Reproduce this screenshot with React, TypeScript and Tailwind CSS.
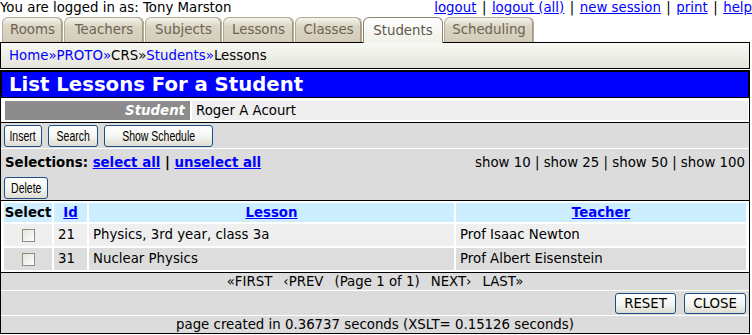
import type { ReactNode } from "react";

const tabs = [
    { label: "Rooms", w: "w-[61px]" },
    { label: "Teachers", w: "w-[80px]" },
    { label: "Subjects", w: "w-[77px]" },
    { label: "Lessons", w: "w-[71px]" },
    { label: "Classes", w: "w-[67px]" },
    { label: "Students", w: "w-[80px]", active: true },
    { label: "Scheduling", w: "w-[90px]" },
];

const rows = [
    { id: "21", lesson: "Physics, 3rd year, class 3a", teacher: "Prof Isaac Newton", bg: "bg-[#efefef]" },
    { id: "31", lesson: "Nuclear Physics", teacher: "Prof Albert Eisenstein", bg: "bg-[#dddddd]" },
];

function Btn({ children, className }: { children: ReactNode; className: string }) {
    return (
        <button className={`rounded-[3px] border border-[#1c4f83] bg-[linear-gradient(to_bottom,#ffffff,#f4f4f0_55%,#dedbd0)] text-black leading-none ${className}`}>
            {children}
        </button>
    );
}

// narrow button text, like the old system font
function Narrow({ children }: { children: ReactNode }) {
    return <span className="inline-block whitespace-nowrap [transform:scaleX(0.75)] font-['Liberation_Sans',sans-serif] text-[14px]">{children}</span>;
}

function Sep() {
    return <span className="px-[5.5px] text-black">|</span>;
}

export default function App() {
    return (
        <div className="w-[752px] h-[335px] overflow-hidden bg-white font-['DejaVu_Sans',sans-serif] text-[13.33px] text-black">
            {/* top line */}
            <div className="flex justify-between w-[752px] h-[17px] leading-[15px]">
                <span>You are logged in as: Tony Marston</span>
                <span className="flex">
                    <a className="text-[#0000ff] underline">logout</a>
                    <Sep />
                    <a className="text-[#0000ff] underline">logout (all)</a>
                    <Sep />
                    <a className="text-[#0000ff] underline">new session</a>
                    <Sep />
                    <a className="text-[#0000ff] underline">print</a>
                    <Sep />
                    <a className="text-[#0000ff] underline">help</a>
                </span>
            </div>

            {/* tabs */}
            <div className="flex items-start h-[25px] pl-[2px] gap-[1px]">
                {tabs.map(t => (
                    <div
                        key={t.label}
                        className={t.active
                            ? `${t.w} h-[26px] relative z-10 flex items-center justify-center rounded-t-[6px] border border-b-0 border-[#8d8470] bg-[linear-gradient(to_bottom,#ffffff,#f7f7f3_50%,#f2f2ec)] text-[#5e574b]`
                            : `${t.w} h-[25px] flex items-center justify-center rounded-t-[6px] border border-b-0 border-[#b4ab95] bg-[linear-gradient(to_bottom,#f6f4ee,#dbd5c5_35%,#d3ccb9)] text-[#6d6352] shadow-[inset_-1px_0_0_#a39a82]`}
                    >
                        {t.label}
                    </div>
                ))}
            </div>

            {/* breadcrumb */}
            <div className="w-[750px] h-[27px] border border-black bg-[linear-gradient(to_bottom,#f8f8f4,#eeeee8_50%,#e5e5dd)] flex items-center pl-[8px]">
                <a className="text-[#0000ff]">Home</a>
                <span className="text-[#0000ff]">»</span>
                <a className="text-[#0000ff]">PROTO</a>
                <span className="text-[#0000ff]">»</span>
                <span>CRS»</span>
                <a className="text-[#0000ff]">Students</a>
                <span className="text-[#0000ff]">»</span>
                <span>Lessons</span>
            </div>

            {/* main frame */}
            <div className="w-[750px] mt-[1px] border border-black">
                <div className="h-[27px] border border-black bg-[#0000ff] flex items-center pl-[7px]">
                    <span className="text-white font-bold text-[19.7px] leading-none">List Lessons For a Student</span>
                </div>

                <div className="flex gap-[2px] pl-[4px] pr-[1px] pt-[3px] pb-[2px] h-[24px]">
                    <div className="w-[185px] h-[19px] bg-[#8c8c8c] text-white font-bold italic text-right pr-[5px] leading-[19px]">Student</div>
                    <div className="flex-1 h-[19px] bg-[#efefef] pl-[4px] leading-[19px]">Roger A Acourt</div>
                </div>

                <div className="border-t border-black bg-[#dcdcdc] border-b border-b-white h-[27px] flex items-start gap-[6px] pl-[3px] pt-[2px]">
                    <Btn className="w-[38px] h-[22px]"><Narrow>Insert</Narrow></Btn>
                    <Btn className="w-[50px] h-[22px]"><Narrow>Search</Narrow></Btn>
                    <Btn className="w-[109px] h-[22px]"><Narrow>Show Schedule</Narrow></Btn>
                </div>

                <div className="bg-[#dcdcdc] h-[51px]">
                    <div className="h-[28px] flex items-center justify-between pl-[4px] pr-[4px]">
                        <span className="font-bold">
                            Selections: <a className="text-[#0000ff] underline">select all</a> | <a className="text-[#0000ff] underline">unselect all</a>
                        </span>
                        <span>show 10 | show 25 | show 50 | show 100</span>
                    </div>
                    <div className="pl-[3px]">
                        <Btn className="w-[44px] h-[22px]"><Narrow>Delete</Narrow></Btn>
                    </div>
                </div>

                <div className="border-t border-black pl-[1px] h-[72px]">
                    <table className="border-separate border-spacing-[2px] bg-white">
                        <thead>
                            <tr className="h-[19px] leading-[17px] font-bold">
                                <th className="w-[48px] bg-[#cceeff] text-black px-0">Select</th>
                                <th className="w-[33px] bg-[#cceeff] px-0"><a className="text-[#0000ff] underline">Id</a></th>
                                <th className="w-[365px] bg-[#cceeff] px-0"><a className="text-[#0000ff] underline">Lesson</a></th>
                                <th className="w-[290px] bg-[#cceeff] px-0"><a className="text-[#0000ff] underline">Teacher</a></th>
                            </tr>
                        </thead>
                        <tbody>
                            {rows.map(r => (
                                <tr key={r.id} className={`h-[22px] ${r.bg}`}>
                                    <td className="p-0">
                                        <div className="flex justify-center">
                                            <span className="block w-[13px] h-[13px] border border-[#8f8d80] bg-[linear-gradient(135deg,#e4e3dc,#ffffff)]" />
                                        </div>
                                    </td>
                                    <td className="pl-[4px] p-0">{r.id}</td>
                                    <td className="pl-[4px] p-0">{r.lesson}</td>
                                    <td className="pl-[4px] p-0">{r.teacher}</td>
                                </tr>
                            ))}
                        </tbody>
                    </table>
                </div>

                <div className="border-t border-black bg-[#dcdcdc] h-[19px] border-b border-b-white flex items-center justify-center gap-[11px] leading-none">
                    <span>«FIRST</span>
                    <span>‹PREV</span>
                    <span>(Page 1 of 1)</span>
                    <span>NEXT›</span>
                    <span>LAST»</span>
                </div>

                <div className="bg-[#dcdcdc] h-[25px] border-b border-b-white flex items-start justify-end gap-[8px] pr-[3px] pt-[2px]">
                    <Btn className="w-[61px] h-[21px] text-[13.33px]">RESET</Btn>
                    <Btn className="w-[62px] h-[21px] text-[13.33px]">CLOSE</Btn>
                </div>

                <div className="bg-[#dcdcdc] h-[17px] flex items-center justify-center leading-none">
                    page created in 0.36737 seconds (XSLT= 0.15126 seconds)
                </div>
            </div>
        </div>
    );
}
